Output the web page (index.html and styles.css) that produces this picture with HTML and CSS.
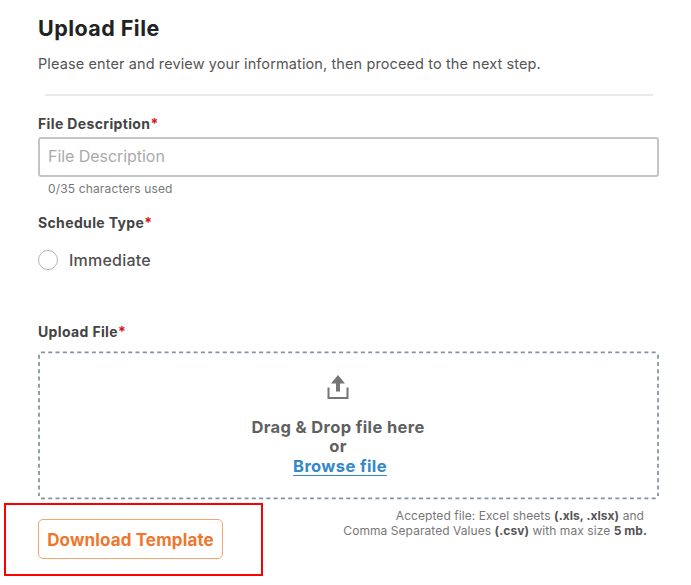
FILE: index.html
```html
<!DOCTYPE html>
<html lang="en">
<head>
<meta charset="utf-8">
<title>Upload File</title>
<link rel="stylesheet" href="styles.css">
</head>
<body>
<main class="page">
  <h1 class="title">Upload File</h1>
  <p class="intro">Please enter and review your information, then proceed to the next step.</p>
  <hr class="divider">
  <label class="label label-description" for="description">File Description<span class="required">*</span></label>
  <input class="input" id="description" type="text" maxlength="35" placeholder="File Description">
  <p class="counter">0/35 characters used</p>
  <h2 class="label label-schedule">Schedule Type<span class="required">*</span></h2>
  <label class="option"><input class="radio" type="radio" name="schedule"><span>Immediate</span></label>
  <h2 class="label label-upload">Upload File<span class="required">*</span></h2>
  <section class="dropzone">
    <svg class="outline" width="621" height="148" viewBox="0 0 621 148"><path d="M3 1.3H618M3 147.3H618M1 3.7V145M620 3.7V145"/></svg>
    <svg class="upload-icon" width="22" height="25" viewBox="0 0 22 25"><path class="tray" d="M1.5 12.5v10.5h19V12.5"/><path class="arrow" d="M11 0l7 8.5h-5V16.5H9V8.5H4z"/></svg>
    <p class="drop-text">Drag &amp; Drop file here</p>
    <p class="drop-text drop-or">or</p>
    <a class="browse" href="#">Browse file</a>
  </section>
  <footer class="footer">
    <div class="highlight"><button class="download" type="button">Download Template</button></div>
    <div class="hint">
      <p class="hint-first">Accepted file: Excel sheets <b>(.xls, .xlsx)</b> and</p>
      <p class="hint-second">Comma Separated Values <b>(.csv)</b> with max size <b>5 mb.</b></p>
    </div>
  </footer>
</main>
</body>
</html>
```
FILE: styles.css
```css
* { box-sizing: border-box; }
body { margin: 0; background: #fff; color: #4a4a4a; font-family: Inter, "Liberation Sans", sans-serif; }
h1, h2, p { margin: 0; }
.page { width: 691px; height: 585px; padding: 14px 32px 0 38px; overflow: hidden; }
.title { color: #222; font-size: 21.5px; line-height: 29px; font-weight: 700; letter-spacing: 0.45px; }
.intro { margin-top: 11px; color: #555; font-size: 14.5px; line-height: 20px; letter-spacing: 0.11px; white-space: nowrap; }
.divider { height: 2px; margin: 20px 6px 0 7px; border: 0; background: #e9e9e9; }
.label { display: block; height: 18px; font-size: 14px; line-height: 18px; font-weight: 700; letter-spacing: 0.36px; color: #444; }
.required { color: #d61414; }
.label-description { margin-top: 19px; }
.input { display: block; width: 621px; height: 40px; margin-top: 4px; padding: 0 8px 2px; border: 2px solid #c4c4c4; border-radius: 3px; background: #fff; font: 16px Inter, sans-serif; letter-spacing: -0.05px; outline: 0; }
.input::placeholder { color: #aaa; opacity: 1; }
.counter { margin: 4px 0 0 10px; font-size: 12px; line-height: 16px; letter-spacing: 0.15px; color: #777; }
.label-schedule { margin-top: 17px; }
.option { display: flex; align-items: center; gap: 11px; height: 20px; margin-top: 18px; font-size: 16px; font-weight: 500; letter-spacing: 0.22px; color: #505050; }
.radio { appearance: none; width: 20px; height: 20px; margin: 0; border: 1px solid #b5b5b5; border-radius: 50%; }
.label-upload { margin-top: 53px; }
.dropzone { position: relative; display: flex; flex-direction: column; align-items: center; width: 621px; height: 148px; margin-top: 10px; padding-top: 24px; padding-right: 21px; }
.outline { position: absolute; inset: 0; fill: none; stroke: #8494a5; stroke-width: 1.8; stroke-dasharray: 4 3.27; overflow: visible; }
.upload-icon { flex: none; }
.tray { fill: none; stroke: #757575; stroke-width: 2; }
.arrow { fill: #757575; }
.drop-text { margin-top: 17px; font-size: 16.5px; line-height: 20px; font-weight: 700; letter-spacing: 0.36px; color: #606060; }
.drop-or { margin-top: 0; line-height: 19px; }
.browse { margin-left: 4px; font-size: 16.5px; line-height: 20px; font-weight: 700; letter-spacing: 0.38px; color: #3288c9; text-decoration-thickness: 1px; text-underline-offset: 3px; }
.footer { display: flex; justify-content: space-between; margin: 4px 0 0 -34px; }
.highlight { width: 259px; height: 73px; padding: 14px 0 0 32px; border: 2px solid #f00; }
.download { display: block; width: 185px; height: 40px; padding: 1px 0 0; border: 1px solid #f5a66e; border-radius: 5px; background: #fff; color: #ef762c; font: 700 17px Inter, sans-serif; letter-spacing: 0.14px; }
.hint { padding: 5px 12px 0 0; font-size: 12px; line-height: 15px; letter-spacing: 0.06px; text-align: right; color: #777; white-space: nowrap; }
.hint b { color: #555; }
.hint-first { padding-right: 3px; }
```
